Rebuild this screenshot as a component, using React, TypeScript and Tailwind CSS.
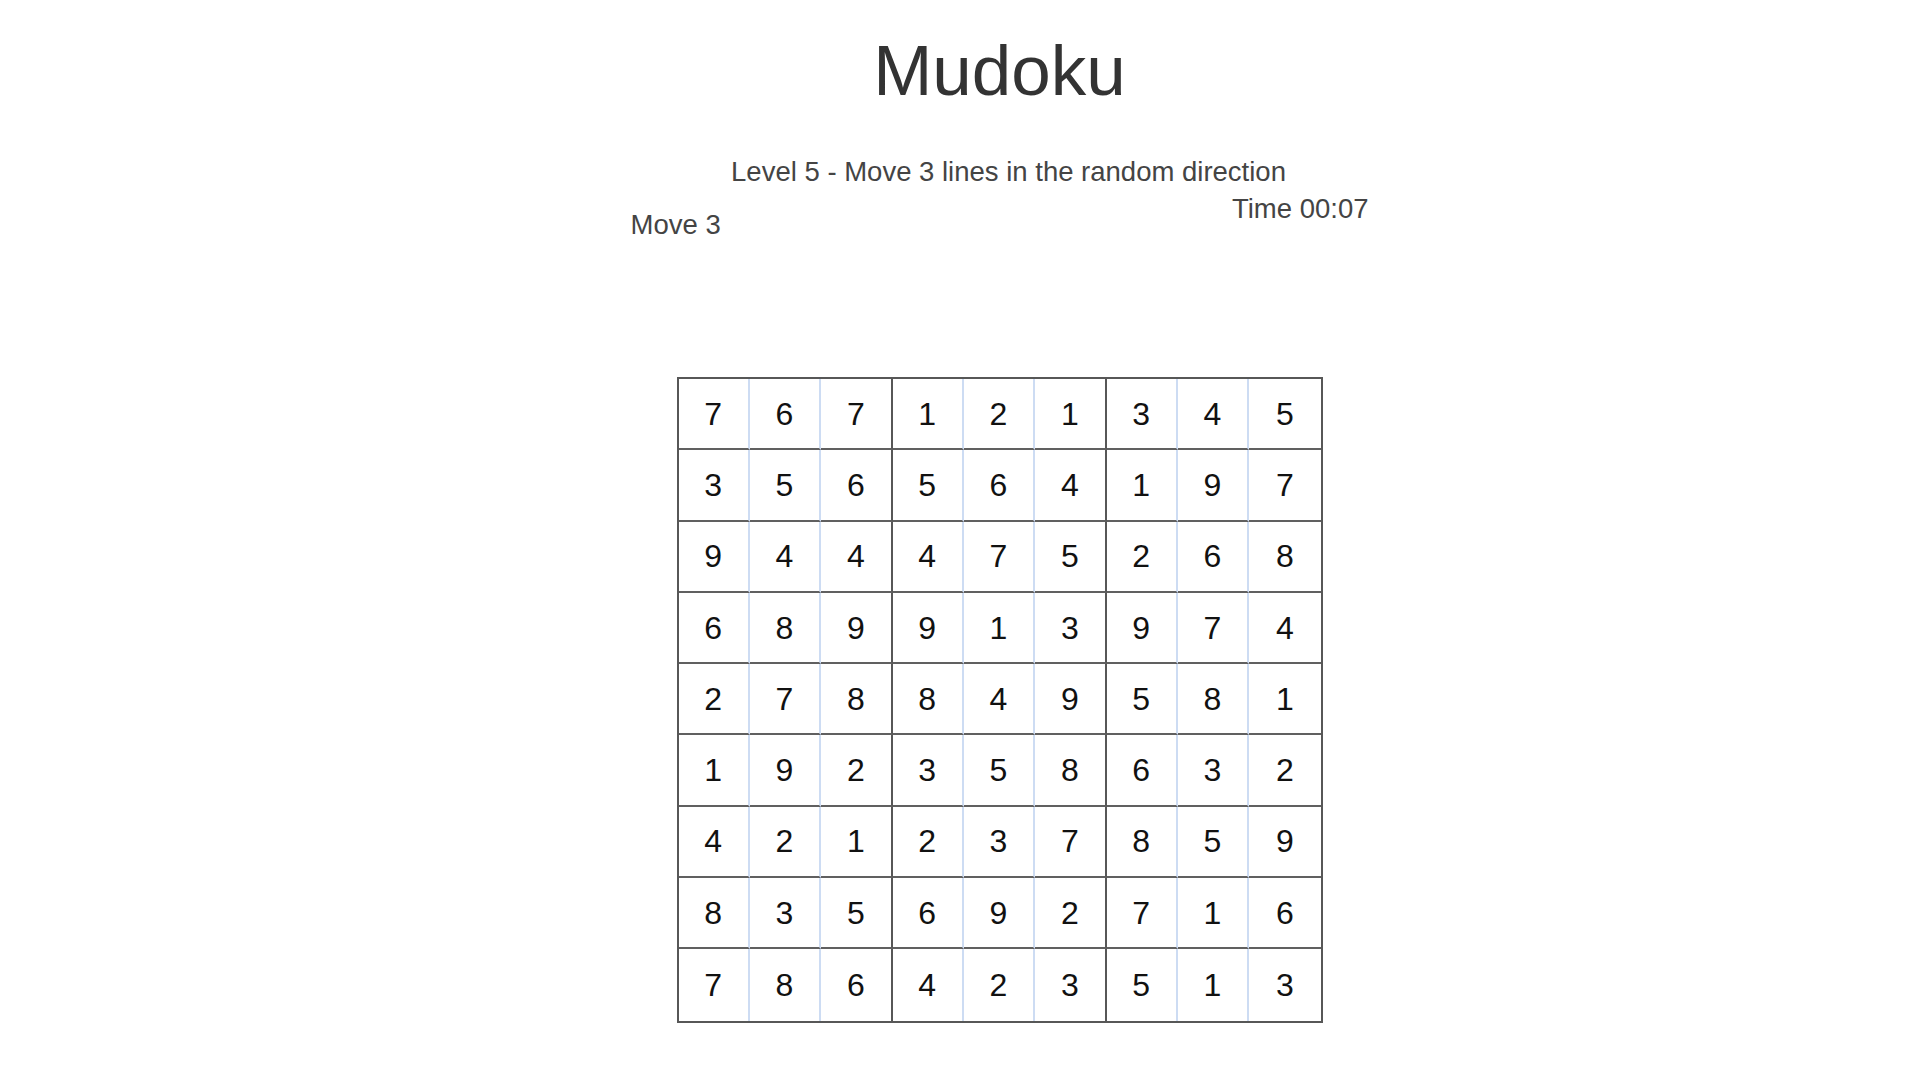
import React from 'react';

const board: number[][] = [
  [7, 6, 7, 1, 2, 1, 3, 4, 5],
  [3, 5, 6, 5, 6, 4, 1, 9, 7],
  [9, 4, 4, 4, 7, 5, 2, 6, 8],
  [6, 8, 9, 9, 1, 3, 9, 7, 4],
  [2, 7, 8, 8, 4, 9, 5, 8, 1],
  [1, 9, 2, 3, 5, 8, 6, 3, 2],
  [4, 2, 1, 2, 3, 7, 8, 5, 9],
  [8, 3, 5, 6, 9, 2, 7, 1, 6],
  [7, 8, 6, 4, 2, 3, 5, 1, 3],
];

const cellClass = (r: number, c: number) => {
  let cls = 'h-[71.3px] flex items-center justify-center';
  if (c < 8) cls += c % 3 === 2 ? ' border-r-2 border-r-[#575757]' : ' border-r-2 border-r-[#cddcf3]';
  if (r < 8) cls += ' border-b-2 border-b-[#606060]';
  return cls;
};

const App: React.FC = () => {
  return (
    <div className="min-h-screen bg-white font-['Liberation_Sans',Arial,sans-serif]">
      <div className="flex flex-col items-center pl-[79px]">
        <h1 className="mt-[35px] text-[71px] leading-none font-normal text-[#333]">Mudoku</h1>

        <p className="mt-[52px] pl-[18px] text-[27.5px] leading-none text-[#444]">
          Level 5 - Move 3 lines in the random direction
        </p>

        <div className="mt-[9px] w-[738px] flex justify-between items-start text-[27.5px] leading-none text-[#444]">
          <span className="mt-[16px]">Move 3</span>
          <span>Time 00:07</span>
        </div>

        <div className="mt-[139px] w-[646px] border-2 border-[#575757] grid grid-cols-9 text-[32px] text-[#111]">
          {board.map((row, r) =>
            row.map((n, c) => (
              <div key={`${r}-${c}`} className={cellClass(r, c)}>
                {n}
              </div>
            ))
          )}
        </div>
      </div>
    </div>
  );
};

export default App;
